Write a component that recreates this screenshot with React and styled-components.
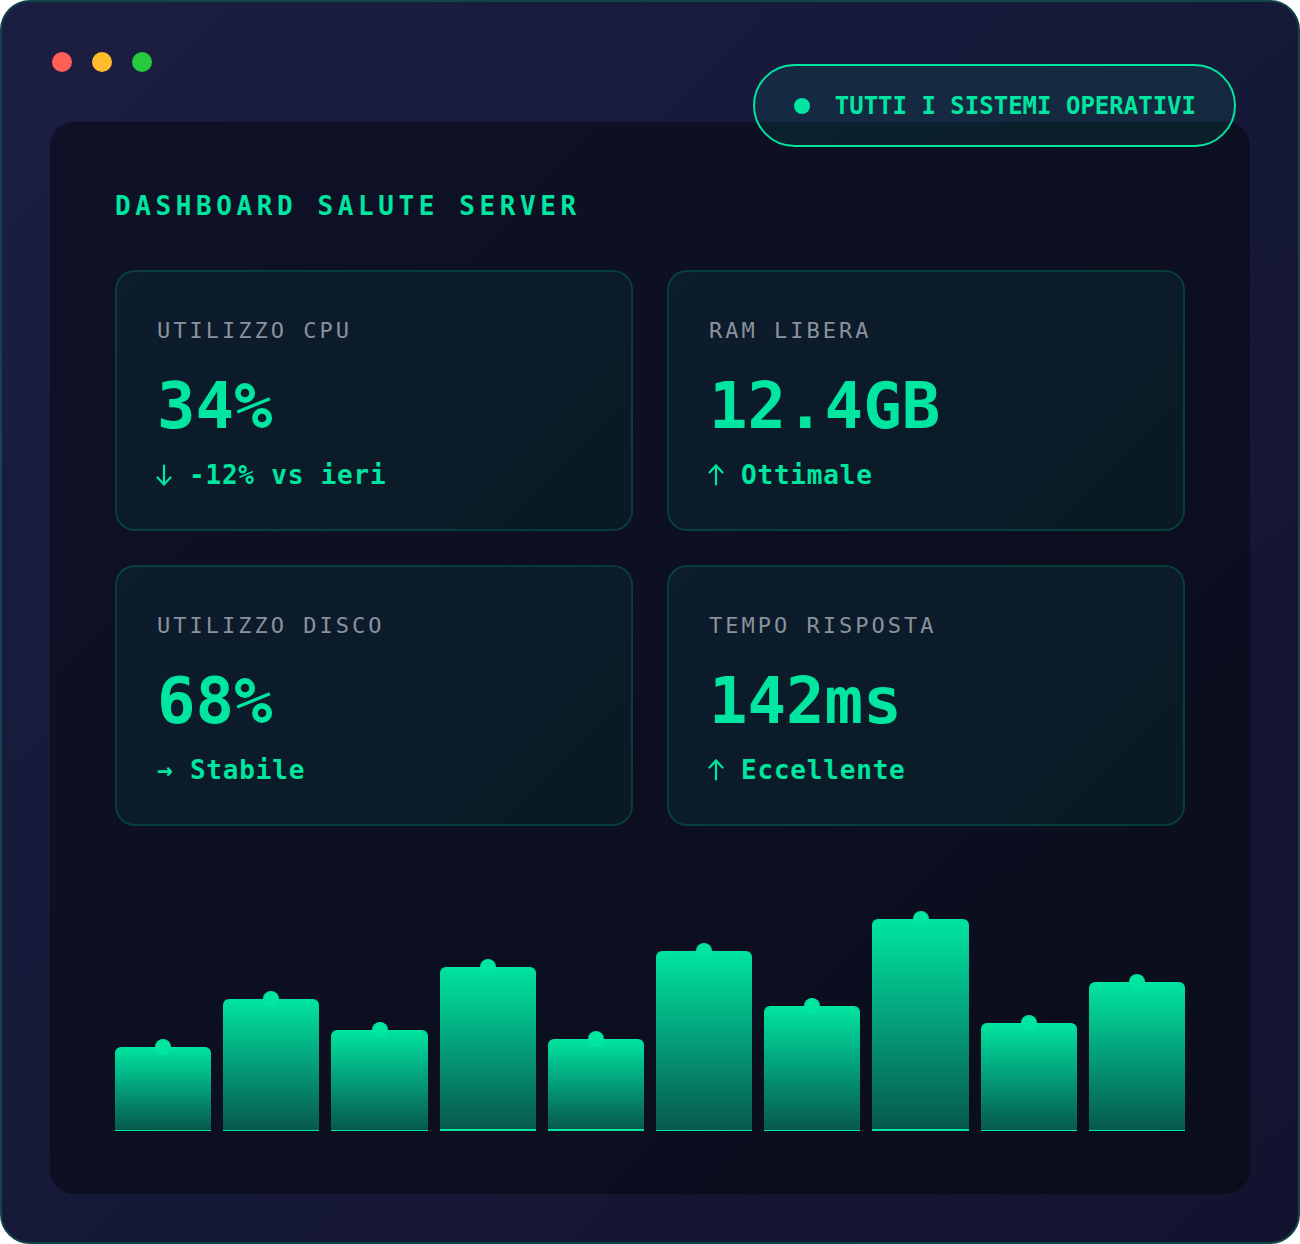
import styled, { createGlobalStyle } from "styled-components";

const GlobalStyle = createGlobalStyle`
  html, body {
    margin: 0;
    padding: 0;
    background: #ffffff;
  }
  * {
    box-sizing: border-box;
  }
`;

const mono = `"DejaVu Sans Mono", "Liberation Mono", monospace`;
const green = "#00e5a0";

const Frame = styled.div`
  position: relative;
  width: 1300px;
  height: 1244px;
  padding: 50px 48px 49px;
  border: 2px solid #13444a;
  border-radius: 30px;
  background: linear-gradient(135deg, #1b1e40 0%, #11132f 100%);
  font-family: ${mono};
  display: flex;
  flex-direction: column;
`;

const Dots = styled.div`
  display: flex;
  gap: 20px;
  padding-left: 2px;
  height: 20px;
  margin-bottom: 50px;
`;

const Dot = styled.span`
  width: 20px;
  height: 20px;
  border-radius: 50%;
  background: ${({ $color }) => $color};
`;

const Badge = styled.div`
  position: absolute;
  top: 62px;
  right: 62px;
  height: 83px;
  padding: 0 38px 0 39px;
  display: flex;
  align-items: center;
  gap: 25px;
  border: 2px solid ${green};
  border-radius: 999px;
  background: rgba(0, 229, 160, 0.08);
  color: ${green};
  font-size: 24px;
  font-weight: 700;
  z-index: 2;
`;

const BadgeDot = styled.span`
  width: 16px;
  height: 16px;
  border-radius: 50%;
  background: ${green};
`;

const Panel = styled.main`
  flex: 1;
  border-radius: 24px;
  background: linear-gradient(135deg, #0f1227 0%, #0a0d1b 100%);
  padding: 64px 65px 63px;
  display: flex;
  flex-direction: column;
`;

const Title = styled.h1`
  margin: 0 0 42px;
  font-size: 26px;
  line-height: 41.6px;
  letter-spacing: 4.6px;
  font-weight: 700;
  color: ${green};
`;

const Grid = styled.section`
  display: grid;
  grid-template-columns: 1fr 1fr;
  gap: 34px;
`;

const Card = styled.div`
  border: 2px solid rgba(0, 229, 160, 0.17);
  border-radius: 20px;
  background: linear-gradient(135deg, #0c1c2d 0%, #0a1a24 100%);
  padding: 46px 40px 39px;
  display: flex;
  flex-direction: column;
`;

const Label = styled.div`
  font-size: 22px;
  line-height: 26px;
  letter-spacing: 3px;
  color: #8a919c;
`;

const Value = styled.div`
  margin-top: 30px;
  font-size: 64px;
  line-height: 64px;
  font-weight: 700;
  color: ${green};
`;

const Trend = styled.div`
  margin-top: 22px;
  display: flex;
  align-items: center;
  font-size: 26px;
  line-height: 30px;
  letter-spacing: 0.8px;
  font-weight: 700;
  color: ${green};
  white-space: pre;
`;

const ArrowIcon = styled.svg`
  width: 16px;
  height: 22px;
  margin: 0 17px 0 -1px;
  flex: none;
  transform: ${({ $dir }) => ($dir === "up" ? "rotate(180deg)" : "none")};
`;

const Arrow = ({ dir }) => (
  <ArrowIcon $dir={dir} viewBox="0 0 16 22" fill="none" stroke={green} strokeWidth="2.2" strokeLinecap="round" strokeLinejoin="round">
    <path d="M8 1.5v19" />
    <path d="M1.5 13.5 8 20.5l6.5-7" />
  </ArrowIcon>
);

const Chart = styled.section`
  margin-top: 65px;
  height: 240px;
  display: flex;
  align-items: flex-end;
  gap: 12px;
`;

const Bar = styled.div`
  position: relative;
  flex: 1;
  border-radius: 6px 6px 0 0;
  background: linear-gradient(180deg, #00e5a0 0%, #03a57c 45%, #07594b 100%);
  border-bottom: ${({ $lit }) =>
    $lit ? `2px solid ${green}` : "1px solid rgba(0, 229, 160, 0.45)"};

  &::before {
    content: "";
    position: absolute;
    top: -8px;
    left: 50%;
    width: 16px;
    height: 16px;
    margin-left: -8px;
    border-radius: 50%;
    background: ${green};
  }
`;

const stats = [
  { label: "UTILIZZO CPU", value: "34%", dir: "down", trend: "-12% vs ieri" },
  { label: "RAM LIBERA", value: "12.4GB", dir: "up", trend: "Ottimale" },
  { label: "UTILIZZO DISCO", value: "68%", trend: "→ Stabile" },
  { label: "TEMPO RISPOSTA", value: "142ms", dir: "up", trend: "Eccellente" },
];

const bars = [35, 55, 42, 68, 38, 75, 52, 88, 45, 62];
const litBars = [3, 4, 7];

export default function App() {
  return (
    <>
      <GlobalStyle />
      <Frame>
        <Dots>
          <Dot $color="#ff5f56" />
          <Dot $color="#ffbd2e" />
          <Dot $color="#27c93f" />
        </Dots>
        <Badge>
          <BadgeDot />
          TUTTI I SISTEMI OPERATIVI
        </Badge>
        <Panel>
          <Title>DASHBOARD SALUTE SERVER</Title>
          <Grid>
            {stats.map((s) => (
              <Card key={s.label}>
                <Label>{s.label}</Label>
                <Value>{s.value}</Value>
                <Trend>
                  {s.dir && <Arrow dir={s.dir} />}
                  {s.trend}
                </Trend>
              </Card>
            ))}
          </Grid>
          <Chart>
            {bars.map((h, i) => (
              <Bar key={i} $lit={litBars.includes(i)} style={{ height: `${h}%` }} />
            ))}
          </Chart>
        </Panel>
      </Frame>
    </>
  );
}
